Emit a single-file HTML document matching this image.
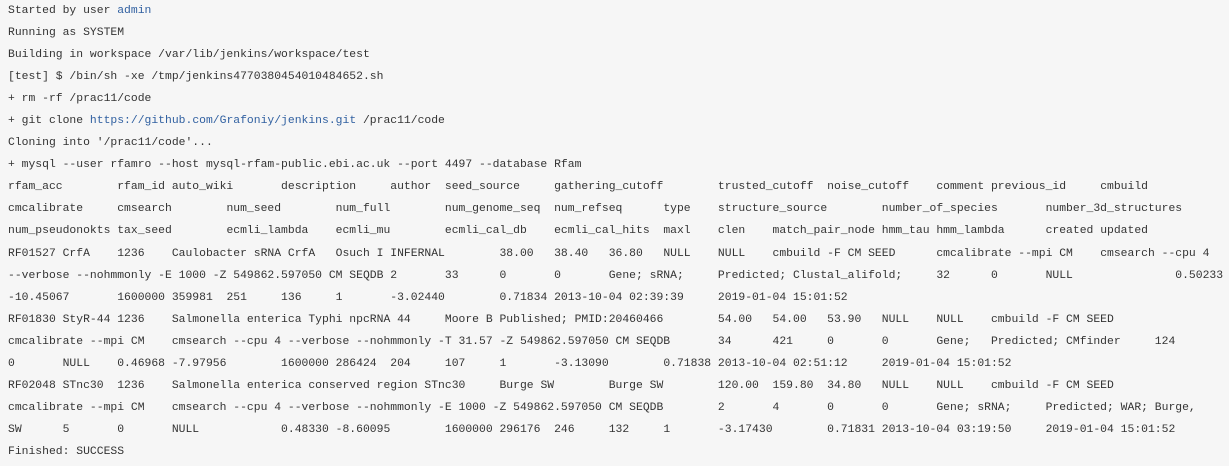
<!DOCTYPE html>
<html><head><meta charset="utf-8"><style>
html,body{margin:0;padding:0;background:#f6f6f6;width:1229px;height:466px;overflow:hidden}
pre{margin:0;padding:0 0 0 8px;font-family:"Liberation Mono",monospace;font-size:11.38px;line-height:22.05px;color:#333;tab-size:8;-moz-tab-size:8;white-space:pre}
a{color:#2f5fa0;text-decoration:none}
</style></head><body><pre>Started by user <a>admin</a>
Running as SYSTEM
Building in workspace /var/lib/jenkins/workspace/test
[test] $ /bin/sh -xe /tmp/jenkins4770380454010484652.sh
+ rm -rf /prac11/code
+ git clone <a>https://github.com/Grafoniy/jenkins.git</a> /prac11/code
Cloning into '/prac11/code'...
+ mysql --user rfamro --host mysql-rfam-public.ebi.ac.uk --port 4497 --database Rfam
rfam_acc	rfam_id	auto_wiki	description	author	seed_source	gathering_cutoff	trusted_cutoff	noise_cutoff	comment	previous_id	cmbuild
cmcalibrate	cmsearch	num_seed	num_full	num_genome_seq	num_refseq	type	structure_source	number_of_species	number_3d_structures
num_pseudonokts	tax_seed	ecmli_lambda	ecmli_mu	ecmli_cal_db	ecmli_cal_hits	maxl	clen	match_pair_node	hmm_tau	hmm_lambda	created	updated
RF01527	CrfA	1236	Caulobacter sRNA CrfA	Osuch I INFERNAL	38.00	38.40	36.80	NULL	NULL	cmbuild -F CM SEED	cmcalibrate --mpi CM	cmsearch --cpu 4
--verbose --nohmmonly -E 1000 -Z 549862.597050 CM SEQDB 2	33	0	0	Gene; sRNA;	Predicted; Clustal_alifold;	32	0	NULL		   0.50233
-10.45067	1600000 359981	251	136	1	-3.02440	0.71834 2013-10-04 02:39:39	2019-01-04 15:01:52
RF01830	StyR-44	1236	Salmonella enterica Typhi npcRNA 44	Moore B	Published; PMID:20460466	54.00	54.00	53.90	NULL	NULL	cmbuild -F CM SEED
cmcalibrate --mpi CM	cmsearch --cpu 4 --verbose --nohmmonly -T 31.57 -Z 549862.597050 CM SEQDB	34	421	0	0	Gene;	Predicted; CMfinder	124
0	NULL	0.46968 -7.97956	1600000 286424	204	107	1	-3.13090	0.71838 2013-10-04 02:51:12	2019-01-04 15:01:52
RF02048	STnc30	1236	Salmonella enterica conserved region STnc30	Burge SW	Burge SW	120.00	159.80	34.80	NULL	NULL	cmbuild -F CM SEED
cmcalibrate --mpi CM	cmsearch --cpu 4 --verbose --nohmmonly -E 1000 -Z 549862.597050 CM SEQDB	2	4	0	0	Gene; sRNA;	Predicted; WAR; Burge,
SW	5	0	NULL		0.48330 -8.60095	1600000 296176	246	132	1	-3.17430	0.71831 2013-10-04 03:19:50	2019-01-04 15:01:52
Finished: SUCCESS</pre></body></html>
